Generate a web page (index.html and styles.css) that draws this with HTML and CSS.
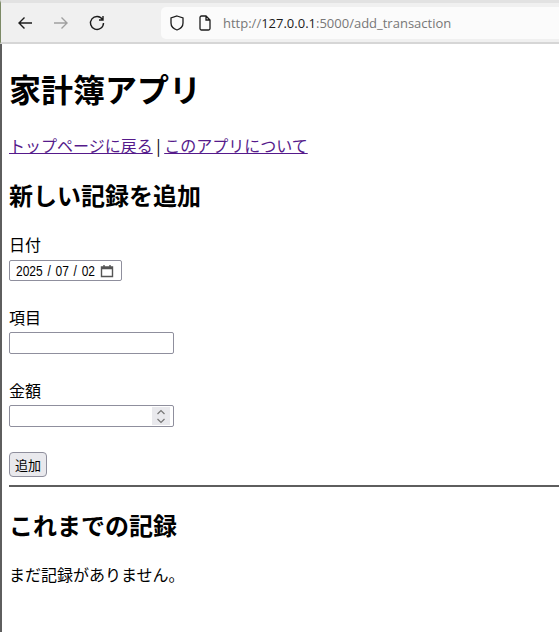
FILE: index.html
```html
<!DOCTYPE html>
<html lang="ja">
  <head>
    <meta charset="UTF-8">
    <title>家計簿アプリ</title>
    <link rel="stylesheet" href="styles.css">
  </head>
  <body>
    <div class="toolbar">
      <svg class="navIcon" viewBox="0 0 16 16"><path d="M15 8H2M7.500 2.500L2 8l5.500 5.500"/></svg>
      <svg class="navIcon disabled" viewBox="0 0 16 16"><path d="M1 8h13M8.500 2.500L14 8l-5.500 5.500"/></svg>
      <svg class="navIcon" viewBox="0 0 16 16"><path d="M13.500 4.500A6.500 6.500 0 1 0 14.500 8M14 1v4h-4"/></svg>
      <div class="urlBar">
        <svg class="urlIcon" viewBox="0 0 16 16"><path d="M8 1l6 2v5c0 3.500-3 6-6 7-3-1-6-3.500-6-7V3z"/></svg>
        <svg class="urlIcon" viewBox="0 0 16 16"><path d="M3 2.500A1.500 1.500 0 0 1 4.500 1H9l4 4v8.500a1.500 1.500 0 0 1-1.500 1.500h-7A1.500 1.500 0 0 1 3 13.500zM9 1v4h4"/></svg>
        <span class="url">http://<b>127.0.0.1</b>:5000/add_transaction</span>
      </div>
    </div>
    <div class="page">
      <h1>家計簿アプリ</h1>
      <p class="links"><a href="#">トップページに戻る</a> | <a href="#">このアプリについて</a></p>
      <h2>新しい記録を追加</h2>
      <form>
        <div class="field">
          <label>日付</label>
          <div class="box dateBox">
            <span class="dateText">2025 / 07 / 02</span>
            <svg class="calendar" viewBox="0 0 14 14"><path d="M1.500 3h11v9.500h-11zM1.500 4.500h11M4 1v2M10 1v2"/></svg>
          </div>
        </div>
        <div class="field">
          <label>項目</label>
          <div class="box textBox"></div>
        </div>
        <div class="field">
          <label>金額</label>
          <div class="box textBox numberBox">
            <span class="spinner">
              <svg viewBox="0 0 10 6"><path d="M1.500 5L5 1.500 8.500 5"/></svg>
              <svg viewBox="0 0 10 6"><path d="M1.500 1L5 4.500 8.500 1"/></svg>
            </span>
          </div>
        </div>
        <button type="button" class="addButton">追加</button>
      </form>
      <hr>
      <h2>これまでの記録</h2>
      <p class="empty">まだ記録がありません。</p>
    </div>
  </body>
</html>
```

FILE: styles.css
```css
html, body {
  margin: 0;
  height: 632px;
  overflow: hidden;
}
body {
  background-color: #fff;
  color: #000;
  font-family: "Noto Sans CJK JP", "Liberation Sans", sans-serif;
}
.toolbar {
  display: flex;
  align-items: center;
  box-sizing: border-box;
  height: 44px;
  padding: 1px 0 0 16px;
  background-color: #f0f0f0;
  border-top: 3px solid #e2e2e2;
  border-bottom: 2px solid #d6d6d6;
  border-left: 1px solid #7c8a66;
}
.navIcon {
  width: 16px;
  height: 16px;
  margin-right: 20px;
  fill: none;
  stroke: #1c1c1c;
  stroke-width: 1.4;
}
.navIcon.disabled { stroke: #a0a0a0; }
.urlBar {
  display: flex;
  align-items: center;
  gap: 12px;
  flex: 1;
  height: 32px;
  margin-left: 36px;
  padding-left: 8px;
  background-color: #fbfbfb;
  border-radius: 5px 0 0 5px;
}
.urlIcon {
  width: 16px;
  height: 16px;
  fill: none;
  stroke: #1c1c1c;
  stroke-width: 1.3;
}
.url {
  margin-left: -2px;
  font-family: "Open Sans", sans-serif;
  font-size: 13px;
  color: #777;
}
.url b {
  font-weight: normal;
  color: #1c1c1c;
}
.page {
  box-sizing: border-box;
  height: 588px;
  padding: 1px 0 0 7px;
  border-left: 2px solid #5e5e5e;
}
h1 {
  margin: 19px 0 0;
  font-size: 32px;
  line-height: 48px;
}
.links {
  margin: 21px 0 0;
  font-size: 16px;
  line-height: 24px;
}
.links a { color: #551a8b; }
h2 {
  margin: 20px 0 0;
  font-size: 24px;
  line-height: 36px;
}
form { margin-top: 19px; }
.field { margin-bottom: 24px; }
.field:nth-child(3) { margin-bottom: 25px; }
.field label {
  display: block;
  margin-bottom: 3px;
  font-size: 16px;
  line-height: 24px;
}
.box {
  box-sizing: border-box;
  background-color: #fff;
  border: 1px solid #8f8f9d;
  border-radius: 2px;
}
.dateBox {
  display: flex;
  align-items: center;
  justify-content: space-between;
  width: 113px;
  height: 21px;
  margin-top: 4px;
  padding: 0 7px 0 6px;
}
/* the reference's date digits are narrow and tall */
.dateText {
  width: 79px;
  font-family: "Liberation Sans", sans-serif;
  font-size: 15px;
  line-height: 17px;
  word-spacing: 1.75px;
  white-space: nowrap;
  transform: scaleX(0.8);
  transform-origin: left center;
}
.calendar {
  width: 14px;
  height: 14px;
  fill: none;
  stroke: #555;
  stroke-width: 1.4;
}
.textBox {
  width: 165px;
  height: 22px;
}
.numberBox {
  display: flex;
  justify-content: flex-end;
  align-items: center;
  padding-right: 3px;
}
.spinner {
  display: flex;
  flex-direction: column;
  align-items: center;
  justify-content: center;
  gap: 3px;
  width: 18px;
  height: 18px;
  background-color: #e9e9ed;
}
.spinner svg {
  width: 10px;
  height: 6px;
  fill: none;
  stroke: #777;
  stroke-width: 1.2;
}
.addButton {
  display: block;
  box-sizing: border-box;
  height: 25px;
  padding: 0 5px;
  background-color: #e9e9ed;
  border: 1px solid #8f8f9d;
  border-radius: 4px;
  font-family: inherit;
  font-size: 13px;
}
hr {
  height: 2px;
  margin: 8px 0 0;
  background-color: #5e5e5e;
  border: 0;
}
.empty {
  margin: 19px 0 0;
  font-size: 16px;
  line-height: 24px;
}
```
